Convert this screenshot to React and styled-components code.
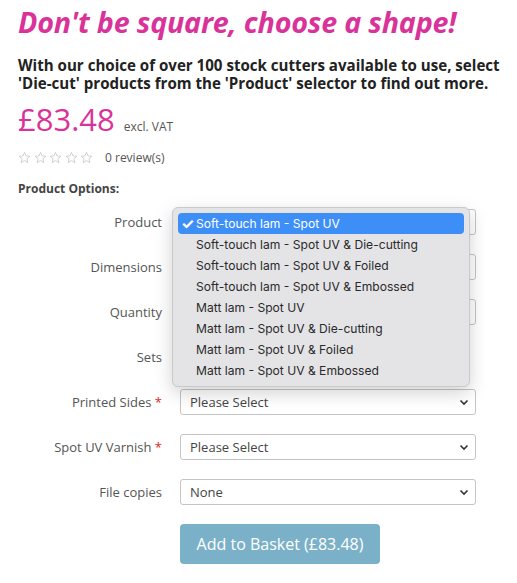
import styled, { createGlobalStyle } from "styled-components";

const GlobalStyle = createGlobalStyle`
  body {
    margin: 0;
    background: #fff;
    font-family: "Open Sans", "Liberation Sans", sans-serif;
  }
`;

const PINK = "#d9339a";

const menuItems = [
  "Soft-touch lam - Spot UV",
  "Soft-touch lam - Spot UV & Die-cutting",
  "Soft-touch lam - Spot UV & Foiled",
  "Soft-touch lam - Spot UV & Embossed",
  "Matt lam - Spot UV",
  "Matt lam - Spot UV & Die-cutting",
  "Matt lam - Spot UV & Foiled",
  "Matt lam - Spot UV & Embossed",
];

const rows = [
  { label: "Product", value: "" },
  { label: "Dimensions", value: "" },
  { label: "Quantity", value: "" },
  { label: "Sets", input: true },
  { label: "Printed Sides", value: "Please Select", required: true },
  { label: "Spot UV Varnish", value: "Please Select", required: true },
  { label: "File copies", value: "None" },
];

const Chevron = () => (
  <svg width="10" height="7" viewBox="0 0 10 7">
    <path d="M1.5 1.5 L5 5 L8.5 1.5" fill="none" stroke="#333" strokeWidth="1.6" />
  </svg>
);

const Stars = () => (
  <StarRow>
    {[0, 1, 2, 3, 4].map((i) => (
      <svg key={i} width="13" height="13" viewBox="0 0 24 24">
        <path
          d="M12 2.5l2.9 6.6 7.1.6-5.4 4.7 1.6 7-6.2-3.7-6.2 3.7 1.6-7L2 9.7l7.1-.6z"
          fill="none"
          stroke="#c8c8c8"
          strokeWidth="1.6"
          strokeLinejoin="round"
        />
      </svg>
    ))}
  </StarRow>
);

export default function App() {
  return (
    <Page>
      <GlobalStyle />
      <Heading>Don't be square, choose a shape!</Heading>
      <Intro>
        With our choice of over 100 stock cutters available to use, select
        'Die-cut' products from the 'Product' selector to find out more.
      </Intro>
      <PriceLine>
        <Price>£83.48</Price>
        <Vat>excl. VAT</Vat>
      </PriceLine>
      <Reviews>
        <Stars />
        <span>0 review(s)</span>
      </Reviews>
      <OptionsTitle>Product Options:</OptionsTitle>
      <Form>
        {rows.map((r) => (
          <Row key={r.label}>
            <Label>
              {r.label}
              {r.required && <Req> *</Req>}
            </Label>
            {r.input ? (
              <SetsInput />
            ) : (
              <Select>
                <span>{r.value}</span>
                <Chevron />
              </Select>
            )}
          </Row>
        ))}
        <Row>
          <span />
          <div>
            <AddButton>Add to Basket (£83.48)</AddButton>
          </div>
        </Row>
        <Menu>
          {menuItems.map((m, i) => (
            <MenuItem key={m} $active={i === 0}>
              <Check>{i === 0 ? "✓" : ""}</Check>
              {m}
            </MenuItem>
          ))}
        </Menu>
      </Form>
    </Page>
  );
}

const Page = styled.div`
  padding: 0 8px 0 18px;
  width: 517px;
  box-sizing: border-box;
`;

const Heading = styled.h1`
  margin: 4px 0 0;
  color: ${PINK};
  font-size: 28.7px;
  line-height: 36px;
  font-style: italic;
  font-weight: 700;
  letter-spacing: -0.2px;
`;

const Intro = styled.p`
  margin: 16px 0 0;
  color: #222;
  font-size: 15.1px;
  line-height: 18px;
  font-weight: 700;
`;

const PriceLine = styled.div`
  display: flex;
  align-items: baseline;
  gap: 9px;
  margin-top: 5px;
`;

const Price = styled.span`
  color: ${PINK};
  font-size: 31px;
  line-height: 44px;
`;

const Vat = styled.span`
  color: #555;
  font-size: 12px;
`;

const Reviews = styled.div`
  display: flex;
  align-items: center;
  gap: 12px;
  margin-top: 8px;
  color: #555;
  font-size: 12px;
`;

const StarRow = styled.div`
  display: flex;
  gap: 2.5px;
`;

const OptionsTitle = styled.div`
  margin-top: 14px;
  color: #444;
  font-size: 12px;
  font-weight: 700;
`;

const Form = styled.div`
  position: relative;
  display: flex;
  flex-direction: column;
  gap: 19px;
  margin-top: 12px;
`;

const Row = styled.div`
  display: grid;
  grid-template-columns: 144px 296px;
  column-gap: 18px;
  align-items: center;
`;

const Label = styled.div`
  text-align: right;
  color: #555;
  font-size: 13px;
`;

const Req = styled.span`
  color: #d9261c;
`;

const Select = styled.div`
  height: 26px;
  box-sizing: border-box;
  border: 1px solid #c4c4c4;
  border-radius: 3px;
  display: flex;
  align-items: center;
  justify-content: space-between;
  padding: 0 6px 0 9px;
  color: #444;
  font-size: 13px;
  background: #fff;
`;

const SetsInput = styled.div`
  width: 60px;
  height: 26px;
  box-sizing: border-box;
  border: 1px solid #c4c4c4;
  border-radius: 3px;
`;

const AddButton = styled.button`
  width: 200px;
  height: 40px;
  border: none;
  border-radius: 4px;
  background: #7ab1c8;
  color: #fff;
  font-family: "Open Sans", sans-serif;
  font-size: 16px;
`;

const Menu = styled.div`
  position: absolute;
  left: 154px;
  top: -2px;
  width: 298px;
  box-sizing: border-box;
  padding: 5px;
  background: #e4e4e7;
  border: 1px solid #c9c9cc;
  border-radius: 6px;
  box-shadow: 0 6px 18px rgba(0, 0, 0, 0.18);
`;

const MenuItem = styled.div`
  display: flex;
  align-items: center;
  height: 21px;
  border-radius: 4px;
  padding-left: 3px;
  font-family: Inter, "Liberation Sans", sans-serif;
  font-size: 12.1px;
  color: ${(p) => (p.$active ? "#fff" : "#2a2a2a")};
  background: ${(p) => (p.$active ? "#3e8ef7" : "transparent")};
`;

const Check = styled.span`
  width: 15px;
  font-size: 15px;
  line-height: 1;
  font-weight: 700;
`;
